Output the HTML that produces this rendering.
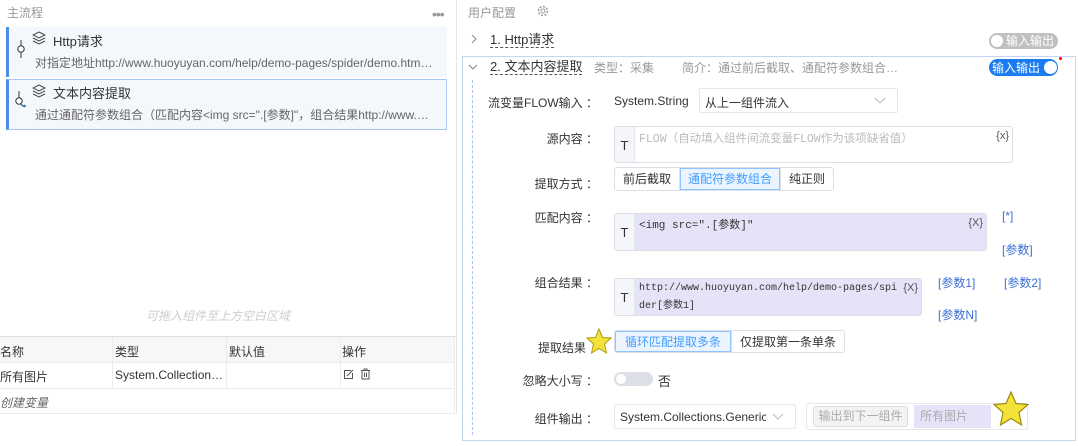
<!DOCTYPE html>
<html><head><meta charset="utf-8"><style>
*{box-sizing:border-box;margin:0;padding:0}
body{width:1078px;height:446px;background:#fff;position:relative;overflow:hidden;font-family:"Liberation Sans","Noto Sans CJK SC",sans-serif;font-size:12px;color:#333}
.a{position:absolute;white-space:nowrap}
.card{position:absolute;left:6px;width:441px;background:#f4f7fb;border-left:3px solid #4a90e2}
.lbl{position:absolute;width:120px;text-align:right;font-size:12px;color:#333}
.ta{position:absolute;border:1px solid #dcdfe6;border-radius:3px;background:#fff;overflow:hidden}
.ta .t{position:absolute;left:0;top:0;bottom:0;width:20px;background:#f5f6fa;border-right:1px solid #e4e7ed;text-align:center;font-size:13px;color:#333}
.ta .c{position:absolute;left:24px;top:3px;font-family:"Liberation Mono","Noto Sans CJK SC",monospace;font-size:10.5px;line-height:19px}
.ta .x{position:absolute;right:3px;top:3px;font-size:11px;color:#555}
.lav{background:#e5e3f7}
.bg{position:absolute;display:flex;border:1px solid #dcdfe6;border-radius:3px;overflow:hidden}
.bg div{padding:0 8px;border-left:1px solid #dcdfe6;line-height:22px;font-size:12px;color:#333}
.bg div:first-child{border-left:none}
.bg .on{background:#ecf5ff;color:#409eff;box-shadow:inset 0 0 0 1px #8cc5ff}
.blue{color:#3b6fd4}
.th{position:absolute;top:337px;height:26px;line-height:26px;background:#f6f8f8}
.cell{position:absolute;font-size:12px}
</style></head><body>
<!-- left panel -->
<div class="a" style="left:7px;top:4px;color:#999;font-size:12px">主流程</div>
<div class="a" style="left:432px;top:6px;color:#999;font-size:14px;letter-spacing:-1px">•••</div>
<div class="card" style="top:27px;height:50px"></div>
<div class="card" style="top:79px;height:51px;border:1px solid #a9c8f5;border-left:3px solid #4a90e2"></div>
<svg class="a" style="left:15px;top:40px" width="12" height="18"><line x1="6" y1="0" x2="6" y2="18" stroke="#333"/><circle cx="6" cy="9" r="3.2" fill="#fff" stroke="#333"/></svg>
<svg class="a" style="left:13px;top:91px" width="14" height="18"><line x1="6" y1="0" x2="6" y2="8" stroke="#333"/><circle cx="6" cy="10" r="3.2" fill="#fff" stroke="#333"/><path d="M8 13 Q10 16 11 15" stroke="#333" fill="none"/><circle cx="11.5" cy="15" r="1.3" fill="#2a6fd6"/></svg>
<svg class="a" style="left:32px;top:31px" width="14" height="14" fill="none" stroke="#444"><path d="M7 1 L13 4 L7 7 L1 4Z"/><path d="M1 7 L7 10 L13 7"/><path d="M1 10 L7 13 L13 10"/></svg>
<svg class="a" style="left:32px;top:84px" width="14" height="14" fill="none" stroke="#444"><path d="M7 1 L13 4 L7 7 L1 4Z"/><path d="M1 7 L7 10 L13 7"/><path d="M1 10 L7 13 L13 10"/></svg>
<div class="a" style="left:53px;top:31px;font-size:13px">Http请求</div>
<div class="a" style="left:35px;top:54px;color:#666">对指定地址http://www.huoyuyan.com/help/demo-pages/spider/demo.htm…</div>
<div class="a" style="left:53px;top:83px;font-size:13px">文本内容提取</div>
<div class="a" style="left:35px;top:106px;color:#666">通过通配符参数组合（匹配内容&lt;img src=".[参数]"，组合结果http://www.…</div>
<div class="a" style="left:146px;top:307px;color:#ccc;font-style:italic">可拖入组件至上方空白区域</div>
<div class="a" style="left:0;top:336px;width:456px;height:1px;background:#e0e0e0"></div>
<div class="th" style="left:0;width:455px"></div>
<div class="a" style="left:0;top:362px;width:455px;height:1px;background:#ececec"></div>
<div class="a" style="left:0;top:388px;width:455px;height:1px;background:#ececec"></div>
<div class="a" style="left:0;top:413px;width:455px;height:1px;background:#ececec"></div>
<div class="a" style="left:112px;top:337px;width:1px;height:51px;background:#ececec"></div>
<div class="a" style="left:226px;top:337px;width:1px;height:51px;background:#ececec"></div>
<div class="a" style="left:340px;top:337px;width:1px;height:51px;background:#ececec"></div>
<div class="a" style="left:454px;top:337px;width:1px;height:76px;background:#ececec"></div>
<div class="cell a" style="left:0;top:343px">名称</div>
<div class="cell a" style="left:115px;top:343px">类型</div>
<div class="cell a" style="left:229px;top:343px">默认值</div>
<div class="cell a" style="left:342px;top:343px">操作</div>
<div class="cell a" style="left:0;top:368px">所有图片</div>
<div class="cell a" style="left:115px;top:368px">System.Collection…</div>
<svg class="a" style="left:343px;top:369px" width="11" height="11" fill="none" stroke="#555"><path d="M8 1.5H1.5V9.5H9.5V4"/><path d="M4 7L10 1"/></svg>
<svg class="a" style="left:360px;top:368px" width="11" height="12" fill="none" stroke="#555"><path d="M1 2.5H10M4 2.5V1H7V2.5M2 2.5V11H9V2.5M4.5 4.5V9M6.5 4.5V9"/></svg>
<div class="cell a" style="left:0;top:394px;color:#666;font-style:italic">创建变量</div>
<div class="a" style="left:456px;top:0;width:1px;height:414px;background:#e6e6e6"></div>

<!-- right panel -->
<div class="a" style="left:468px;top:4px;color:#999">用户配置</div>
<svg class="a" style="left:537px;top:5px" width="12" height="12" fill="none" stroke="#999"><circle cx="6" cy="6" r="2"/><circle cx="6" cy="6" r="4.5" stroke-dasharray="2 1.5" stroke-width="1.5"/></svg>
<svg class="a" style="left:470px;top:34px" width="8" height="10" fill="none" stroke="#888"><path d="M2 1L6 5L2 9"/></svg>
<div class="a" style="left:490px;top:32px;font-size:13px;border-bottom:1px dashed #555;line-height:15px">1. Http请求</div>
<div class="a" style="left:989px;top:33px;width:69px;height:16px;border-radius:8px;background:#c0c0c0"></div>
<div class="a" style="left:991px;top:35px;width:12px;height:12px;border-radius:6px;background:#fff"></div>
<div class="a" style="left:1006px;top:33px;color:#fff;line-height:16px">输入输出</div>
<div class="a" style="left:462px;top:56px;width:614px;height:385px;border:1px solid #c5d6f5"></div>
<svg class="a" style="left:468px;top:63px" width="10" height="8" fill="none" stroke="#888"><path d="M1 2L5 6L9 2"/></svg>
<div class="a" style="left:490px;top:59px;font-size:13px;border-bottom:1px dashed #555;line-height:15px">2. 文本内容提取</div>
<div class="a" style="left:594px;top:59px;color:#999">类型：采集</div>
<div class="a" style="left:682px;top:59px;color:#999">简介：通过前后截取、通配符参数组合…</div>
<div class="a" style="left:989px;top:59px;width:69px;height:17px;border-radius:9px;background:#1a7cf0"></div>
<div class="a" style="left:1044px;top:61px;width:13px;height:13px;border-radius:7px;background:#fff"></div>
<div class="a" style="left:992px;top:60px;color:#fff;line-height:16px">输入输出</div>
<div class="a" style="left:1059px;top:57px;width:3px;height:3px;border-radius:2px;background:#f00"></div>
<div class="a" style="left:472px;top:80px;height:355px;border-left:1px dashed #a9c4f0"></div>

<div class="lbl" style="left:478px;top:94px">流变量FLOW输入 ：</div>
<div class="a" style="left:614px;top:94px">System.String</div>
<div class="a" style="left:699px;top:88px;width:199px;height:25px;border:1px solid #e4e7ed;border-radius:2px"></div>
<div class="a" style="left:705px;top:94px">从上一组件流入</div>
<svg class="a" style="left:874px;top:97px" width="12" height="8" fill="none" stroke="#bbb"><path d="M1 1L6 6L11 1"/></svg>

<div class="lbl" style="left:478px;top:130px">源内容 ：</div>
<div class="ta" style="left:614px;top:126px;width:399px;height:37px"><div class="t" style="line-height:37px">T</div><div class="c" style="color:#bbb;font-size:11.5px">FLOW（自动填入组件间流变量FLOW作为该项缺省值）</div><div class="x">{x}</div></div>

<div class="lbl" style="left:478px;top:175px">提取方式 ：</div>
<div class="bg" style="left:614px;top:167px;height:24px"><div>前后截取</div><div class="on">通配符参数组合</div><div>纯正则</div></div>

<div class="lbl" style="left:478px;top:209px">匹配内容 ：</div>
<div class="ta lav" style="left:614px;top:213px;width:373px;height:38px"><div class="t" style="line-height:38px">T</div><div class="c" style="font-size:11px">&lt;img src=".[参数]"</div><div class="x">{X}</div></div>
<div class="a blue" style="left:1002px;top:209px">[*]</div>
<div class="a blue" style="left:1002px;top:241px">[参数]</div>

<div class="lbl" style="left:478px;top:274px">组合结果 ：</div>
<div class="ta lav" style="left:614px;top:278px;width:308px;height:38px"><div class="t" style="line-height:38px">T</div><div class="c" style="line-height:18px;top:1px;font-size:10px">http://www.huoyuyan.com/help/demo-pages/spi<br>der[参数1]</div><div class="x">{X}</div></div>
<div class="a blue" style="left:938px;top:274px">[参数1]</div>
<div class="a blue" style="left:1004px;top:274px">[参数2]</div>
<div class="a blue" style="left:938px;top:306px">[参数N]</div>

<div class="lbl" style="left:466px;top:339px">提取结果</div>
<svg class="a" style="left:586px;top:328px" width="26" height="26"><path d="M13 1L16.5 9.5L25 10L18.5 16L20.5 25L13 20.5L5.5 25L7.5 16L1 10L9.5 9.5Z" fill="#f2e23a" stroke="#b09a10"/></svg>
<div class="bg" style="left:614px;top:330px;height:23px"><div class="on" style="padding:0 10px">循环匹配提取多条</div><div>仅提取第一条单条</div></div>

<div class="lbl" style="left:478px;top:372px">忽略大小写 ：</div>
<div class="a" style="left:614px;top:372px;width:39px;height:14px;border-radius:7px;background:#dcdfe6"></div>
<div class="a" style="left:616px;top:374px;width:10px;height:10px;border-radius:5px;background:#fff"></div>
<div class="a" style="left:658px;top:371px;font-size:13px">否</div>

<div class="lbl" style="left:478px;top:410px">组件输出 ：</div>
<div class="a" style="left:614px;top:404px;width:182px;height:25px;border:1px solid #e4e7ed;border-radius:2px;overflow:hidden"><div style="position:absolute;left:5px;top:5px;font-size:12px;width:146px;overflow:hidden">System.Collections.Generic</div></div>
<svg class="a" style="left:772px;top:413px" width="12" height="8" fill="none" stroke="#bbb"><path d="M1 1L6 6L11 1"/></svg>
<div class="a" style="left:806px;top:403px;width:222px;height:27px;border:1px solid #e8e8e8;border-radius:2px"></div>
<div class="a" style="left:813px;top:406px;width:95px;height:21px;border:1px solid #ddd;border-radius:3px;background:#f3f3f3;color:#aaa;text-align:center;line-height:19px">输出到下一组件</div>
<div class="a" style="left:914px;top:405px;width:77px;height:23px;background:#e5e3f7;color:#aaa;padding-left:6px;line-height:23px">所有图片</div>
<svg class="a" style="left:993px;top:391px" width="36" height="36"><path d="M18 1L23 12.5L35 13.5L26 21.5L28.5 34L18 27.5L7.5 34L10 21.5L1 13.5L13 12.5Z" fill="#f2e23a" stroke="#a08a10" stroke-width="1.2"/></svg>
</body></html>
